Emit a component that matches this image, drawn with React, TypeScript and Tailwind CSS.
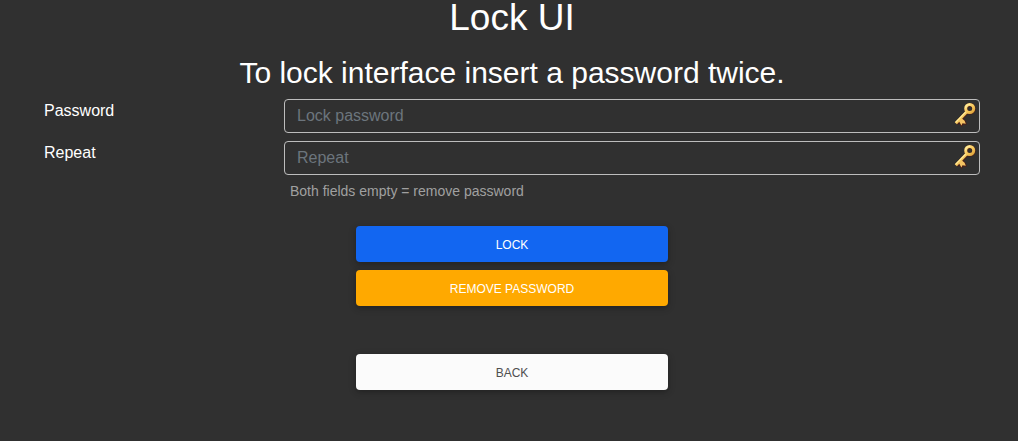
import { useId } from "react";

function KeyIcon({ className }: { className?: string }) {
  const id = useId();
  return (
    <svg viewBox="0 0 22 24" aria-hidden="true" className={className}>
      <defs>
        <linearGradient id={id} x1="0" y1="0" x2="1" y2="1">
          <stop offset="0" stopColor="#ffe58a" />
          <stop offset="0.6" stopColor="#f6c659" />
          <stop offset="1" stopColor="#dba23c" />
        </linearGradient>
      </defs>
      <g fill="none" stroke="#4a2018" strokeLinejoin="round">
        <circle cx="15.9" cy="5.8" r="4" strokeWidth="3.8" />
        <path d="M13 9.2 2.4 20.6" strokeWidth="4" />
        <path d="M4.4 17.6l3.2 5.2 1-2.2 3.4.4-1.2-3.2-3.2-2.4z" strokeWidth="1.6" />
      </g>
      <path d="M4.6 17.4l2.8 5.1 1.1-2.2 3.3.4-1.2-3-3.2-2.6z" fill="#f4c364" />
      <path d="M12.8 8.8 1.8 20.2" stroke="#f4c55c" strokeWidth="3" />
      <path d="M12.1 8.6 1.6 19.4" stroke="#ffeda0" strokeWidth="1.2" />
      <circle cx="15.7" cy="5.5" r="4" fill="none" stroke={`url(#${id})`} strokeWidth="3" />
      <path d="M11.7 5a4.1 4.1 0 0 1 4.3-3.7" fill="none" stroke="#fff0a8" strokeWidth="0.9" />
    </svg>
  );
}

function PasswordField({ id, label, placeholder }: { id: string; label: string; placeholder: string }) {
  return (
    <div className="grid grid-cols-4">
      <label htmlFor={id} className="px-3 text-base leading-6">
        {label}
      </label>
      <div className="relative col-span-3 px-3">
        <input
          id={id}
          type="password"
          placeholder={placeholder}
          className="block h-[34px] w-full rounded border border-[#bdbdbd] bg-transparent pr-9 pl-3 text-base text-white outline-none placeholder:text-[#6c757d] focus:border-[#1266f1]"
        />
        <KeyIcon className="pointer-events-none absolute top-1 right-4 h-6 w-[22px]" />
      </div>
    </div>
  );
}

const button =
  "h-9 w-full rounded pt-0.5 text-xs leading-[18px] uppercase shadow-[0_2px_5px_0_rgba(0,0,0,0.2),0_2px_10px_0_rgba(0,0,0,0.1)]";

export default function App() {
  return (
    <main className="min-h-screen bg-[#303030] pr-[26px] pl-8 font-['Liberation_Sans',Arial,sans-serif] text-white">
      <h1 className="text-center text-[37px] leading-[35px]">Lock UI</h1>
      <h2 className="mt-5 text-center text-[30px] leading-9">To lock interface insert a password twice.</h2>
      <form className="mt-2" onSubmit={(event) => event.preventDefault()}>
        <div className="flex flex-col gap-2">
          <PasswordField id="password" label="Password" placeholder="Lock password" />
          <PasswordField id="repeat" label="Repeat" placeholder="Repeat" />
        </div>
        <div className="grid grid-cols-4">
          <p className="col-span-3 col-start-2 mt-1 pl-[18px] text-sm leading-6 text-[#a0a0a0]">
            Both fields empty = remove password
          </p>
        </div>
        <div className="mt-[23px] grid grid-cols-3 px-3">
          <div className="col-start-2 flex flex-col gap-2">
            <button type="submit" className={`${button} bg-[#1266f1] text-white`}>
              Lock
            </button>
            <button type="button" className={`${button} bg-[#ffa900] text-white`}>
              Remove password
            </button>
            <button type="button" className={`${button} mt-10 bg-[#fbfbfb] text-[#4f4f4f]`}>
              Back
            </button>
          </div>
        </div>
      </form>
    </main>
  );
}
